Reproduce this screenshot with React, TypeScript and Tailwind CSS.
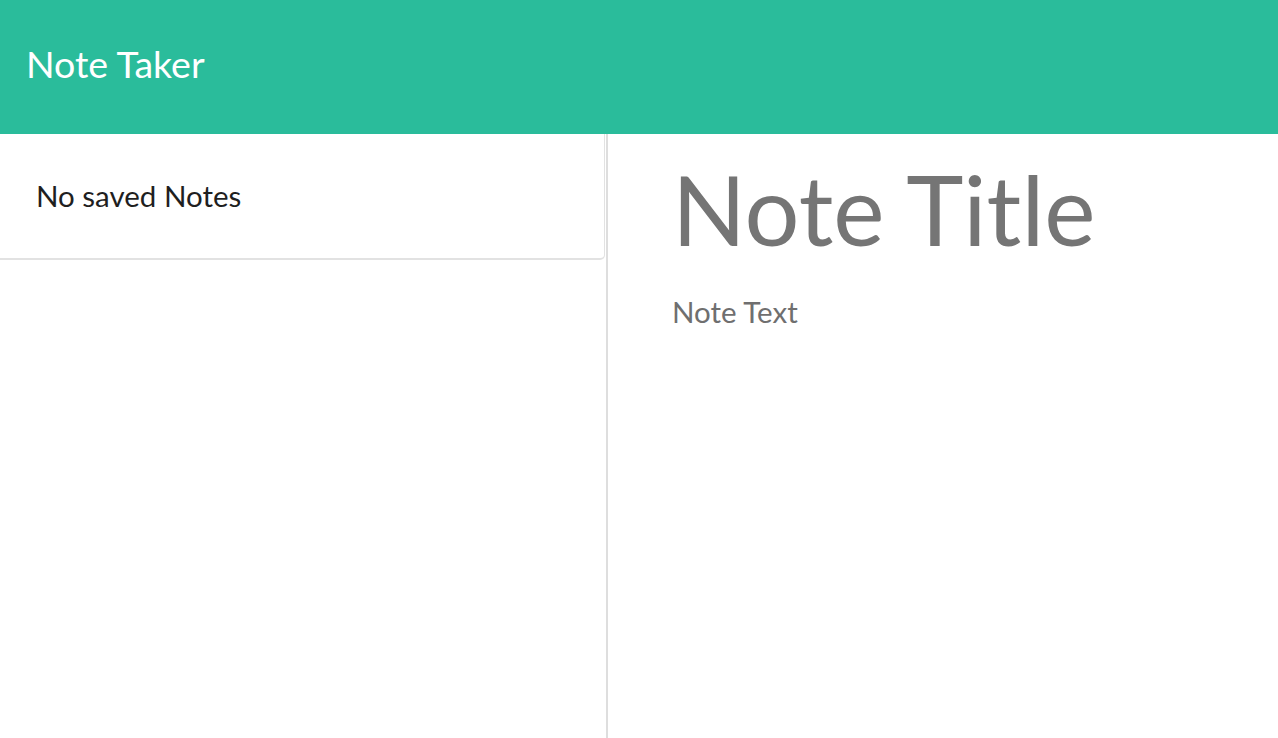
import React from "react";

const App: React.FC = () => {
  return (
    <div className="h-[738px] w-[1278px] flex flex-col bg-white font-['Lato',sans-serif] overflow-hidden">
      <nav className="h-[134px] shrink-0 bg-[#2abc9b] flex items-center px-[26px]">
        <h1 className="text-white text-[37.5px] leading-none pb-[6px]">Note Taker</h1>
      </nav>
      <div className="flex flex-1 min-h-0">
        <div className="w-[608px] shrink-0 border-r-2 border-[#dedede]">
          <ul className="w-[605px] border-b-2 border-r border-[#e2e2e2] rounded-br-[5px] h-[126px] flex items-center px-[36px]">
            <li className="text-[#1f1f1f] text-[29.5px] leading-none">No saved Notes</li>
          </ul>
        </div>
        <div className="flex-1 pl-[64px] pt-[16px]">
          <input
            className="block w-full text-[97px] leading-none text-[#757575] placeholder:text-[#757575] outline-none"
            placeholder="Note Title"
            maxLength={28}
          />
          <textarea
            className="block w-full mt-[27px] text-[29.5px] leading-tight text-[#6f6f6f] placeholder:text-[#6f6f6f] outline-none resize-none h-[300px]"
            placeholder="Note Text"
          />
        </div>
      </div>
    </div>
  );
};

export default App;
